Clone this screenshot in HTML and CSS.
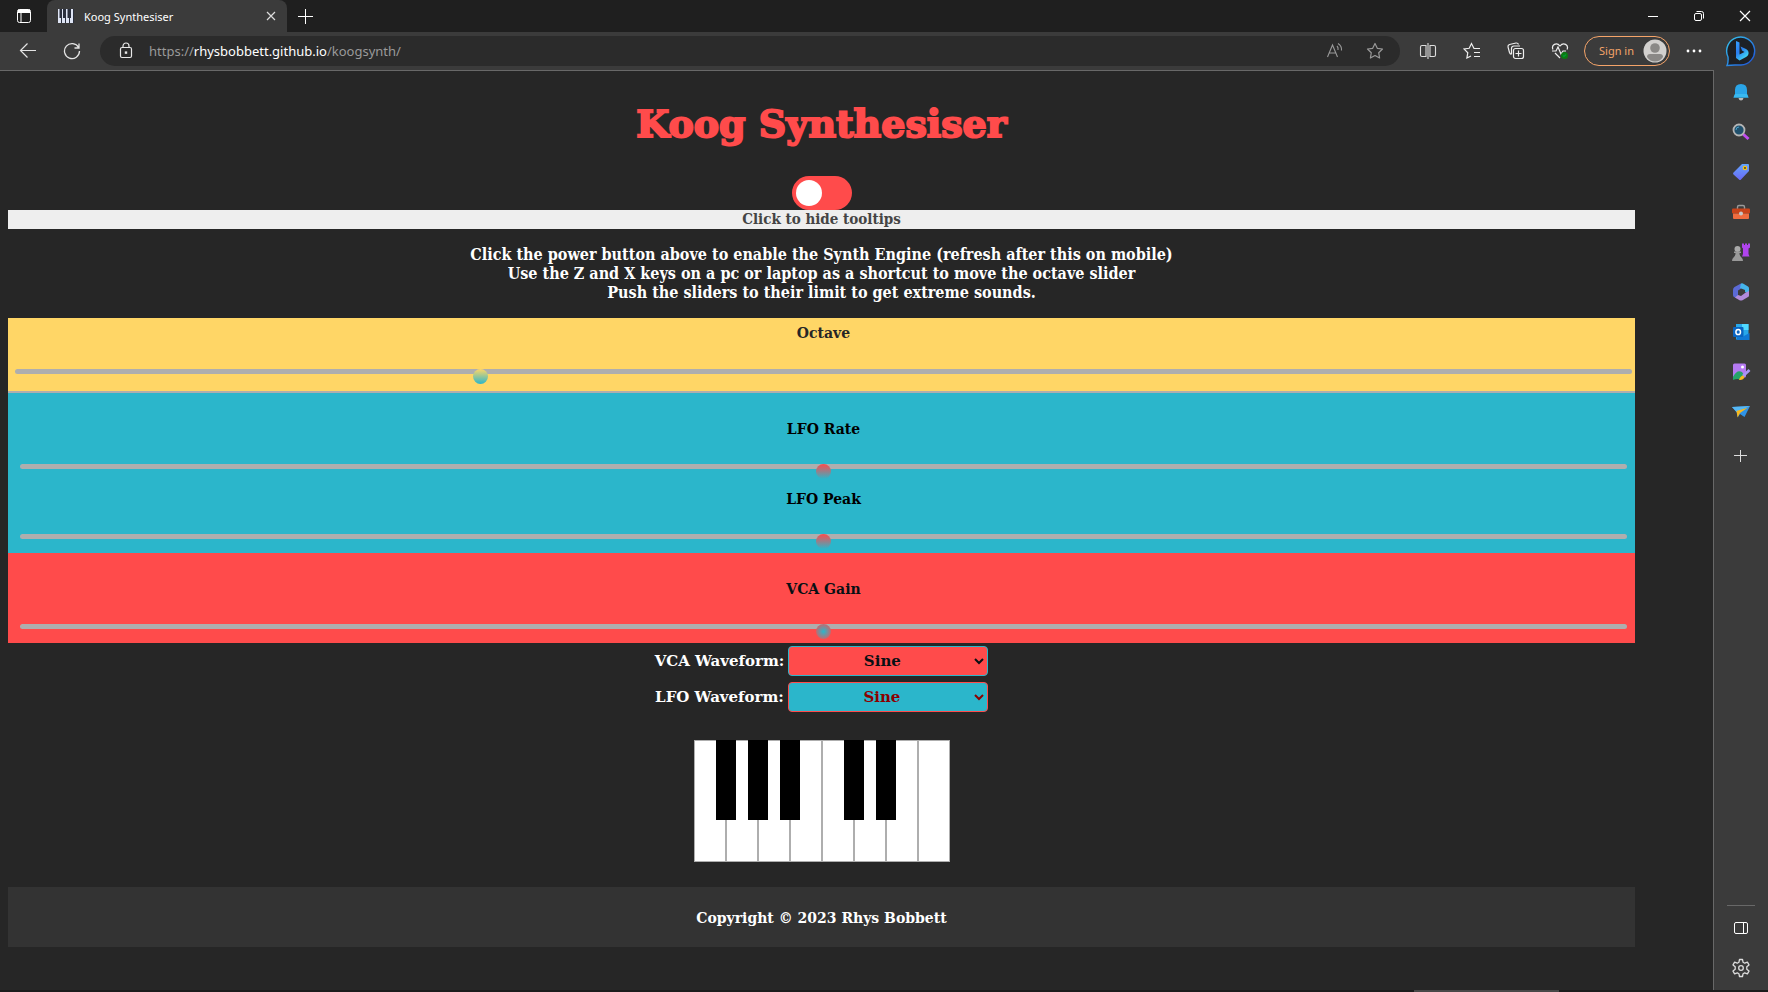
FILE: index.html
```html
<!DOCTYPE html>
<html lang="en">
<head>
<meta charset="utf-8">
<title>Koog Synthesiser</title>
<link rel="stylesheet" href="styles.css">
</head>
<body>
<div class="browser">
  <header class="titlebar">
    <button class="icon-btn tab-actions" aria-label="Tab actions">
      <svg width="16" height="16" viewBox="0 0 16 16" fill="none" stroke="#fff"><rect x="1.5" y="1.5" width="13" height="13" rx="2"/><path d="M2 4h12M2 2.500h12" stroke-width="2"/><path d="M5 5v9"/></svg>
    </button>
    <div class="tab">
      <svg width="16" height="16" viewBox="0 0 16 16"><path fill="#2a2f3d" d="M0 1h16v14H0z"/><path fill="#dfe5f5" d="M0 1h1.500v9H3v5H0zM4 1h1v9h2v5H4zM8 1h1.500v9H11v5H8zM12 10h1V1h2v14h-3z"/></svg>
      <span class="tab-title">Koog Synthesiser</span>
      <button class="icon-btn tab-close" aria-label="Close tab">
        <svg width="10" height="10" viewBox="0 0 10 10" stroke="#ddd" stroke-width="1.2"><path d="M1 1l8 8M9 1L1 9"/></svg>
      </button>
    </div>
    <button class="icon-btn new-tab" aria-label="New tab">
      <svg width="15" height="15" viewBox="0 0 15 15" stroke="#fff"><path d="M7.500 0v15M0 7.500h15"/></svg>
    </button>
    <div class="window-buttons">
      <button class="icon-btn win" aria-label="Minimise"><svg width="12" height="12" viewBox="0 0 12 12" stroke="#fff"><path d="M1 6.500h10"/></svg></button>
      <button class="icon-btn win" aria-label="Restore"><svg width="12" height="12" viewBox="0 0 12 12" fill="none" stroke="#fff"><rect x="1.500" y="3.500" width="7" height="7" rx="1.500"/><path d="M3.500 1.500H8.500q2 0 2 2v5"/></svg></button>
      <button class="icon-btn win" aria-label="Close"><svg width="12" height="12" viewBox="0 0 12 12" stroke="#fff" stroke-width="1.200"><path d="M1 1l10 10M11 1L1 11"/></svg></button>
    </div>
  </header>

  <nav class="toolbar">
    <button class="icon-btn tool back" aria-label="Back"><svg width="18" height="16" viewBox="0 0 18 16" fill="none" stroke="#e4e4e4" stroke-width="1.200"><path d="M17 7.500H1.500M8.500 .5L1.500 7.500l7 7"/></svg></button>
    <button class="icon-btn tool" aria-label="Refresh"><svg width="18" height="18" viewBox="0 0 18 18" fill="none" stroke="#e4e4e4" stroke-width="1.300"><path d="M15.600 5.500A7.500 7.500 0 1 0 16.500 9M16 1.500v4.500h-4.500"/></svg></button>
    <div class="address">
      <svg width="14" height="18" viewBox="0 0 14 18" fill="none" stroke="#e8e8e8" stroke-width="1.200"><rect x="1.500" y="5.500" width="11" height="10" rx="1.500"/><path d="M4 5.500V4a3 3 0 0 1 6 0v1.500"/><rect x="6.400" y="10" width="1.200" height="1.200" fill="#fff"/></svg>
      <div class="url">https://<b>rhysbobbett.github.io</b>/koogsynth/</div>
      <button class="icon-btn" aria-label="Read aloud"><svg width="18" height="18" viewBox="0 0 18 18" fill="none" stroke="#999" stroke-width="1.100"><path d="M1.500 15L6.500 3l5 12M3.200 11h6.600M11 4q1.500 1.500 1 4M12 1.500q4 2.500 3.500 7"/></svg></button>
      <button class="icon-btn star" aria-label="Add to favourites"><svg width="18" height="18" viewBox="0 0 18 18" fill="none" stroke="#999" stroke-width="1.200" stroke-linejoin="round"><path d="M9 1.500l2.300 4.800 5.200.7-3.800 3.700.9 5.300L9 13.500 4.400 16l.9-5.300L1.500 7l5.200-.7z"/></svg></button>
    </div>
    <div class="actions">
      <button class="icon-btn tool" aria-label="Split screen"><svg width="18" height="18" viewBox="0 0 18 18" fill="none" stroke="#ddd" stroke-width="1.100"><path d="M7 3.500H3q-1.500 0-1.500 1.500v8q0 1.500 1.500 1.500h4zM11 3.500h4q1.500 0 1.500 1.500v8q0 1.500-1.500 1.500h-4zM9 1v16"/></svg></button>
      <button class="icon-btn tool" aria-label="Favourites"><svg width="18" height="18" viewBox="0 0 18 18" fill="none" stroke="#eee" stroke-width="1.200"><path d="M17 6.500h-6L8.500 1.500 6.200 6.300 1 7l3.800 3.700-.9 5.300 4.100-2M11 10.500h6M11 14.500h6"/></svg></button>
      <button class="icon-btn tool" aria-label="Collections"><svg width="18" height="18" viewBox="0 0 18 18" fill="none" stroke="#eee" stroke-width="1.200"><rect x="6.500" y="6.500" width="10" height="10" rx="2"/><path d="M11.500 8.500v6M8.500 11.500h6M4.500 12.500q-1.500-.5-2-2L1 5q-.3-2 1.500-2.500L9 1q2-.2 2.500 1.500M4.500 12V6.500q0-2.500 2.500-2.500h6"/></svg></button>
      <button class="icon-btn tool" aria-label="Browser essentials"><svg width="18" height="18" viewBox="0 0 18 18" fill="none" stroke="#eee" stroke-width="1.200"><path d="M2 7.500C0 3 5.500-.5 9 4c3.500-4.500 9-1 7 3.500M1 9h4l2-4 3 7 2-3h3M4 11l5 5"/><circle cx="13.500" cy="13.500" r="3.500" fill="#0b7a12" stroke="none"/><path d="M12 13.500l1 1 2-2" stroke="#093" /></svg></button>
    </div>
    <button class="signin"><span>Sign in</span>
      <svg width="24" height="24" viewBox="0 0 24 24"><circle cx="12" cy="12" r="11.500" fill="#d2d0ce"/><circle cx="12" cy="9" r="4.800" fill="#8a8886"/><path d="M4 18q0-3 3-3h10q3 0 3 3-3 4.500-8 4.500T4 18z" fill="#8a8886"/></svg>
    </button>
    <button class="icon-btn more" aria-label="Settings and more"><svg width="16" height="4" viewBox="0 0 16 4" fill="#fff"><circle cx="2" cy="2" r="1.400"/><circle cx="8" cy="2" r="1.400"/><circle cx="14" cy="2" r="1.400"/></svg></button>
    <button class="icon-btn bing" aria-label="Bing">
      <svg width="32" height="32" viewBox="0 0 32 32"><defs><linearGradient id="ring" x1="0" y1="0" x2="1" y2="1"><stop stop-color="#36c6ee"/><stop offset="1" stop-color="#1e4fd8"/></linearGradient><linearGradient id="bee" x1="0" y1="0" x2="0.600" y2="1"><stop stop-color="#35a0ff"/><stop offset=".5" stop-color="#2a7df0"/><stop offset="1" stop-color="#42dcf5"/></linearGradient></defs><path d="M2 30.500Q3.500 27 3 22A14 14 0 1 1 16 30H10q-4 0-8 .5z" fill="#1d2026" stroke="url(#ring)" stroke-width="1.400"/><path d="M11 6l3.500 1.500v12l5-2.500-2.500-1.500-1.500-4 5.500 2.500q3 1.500 2.500 5-.5 2-2.500 3l-6.500 3.500L11 23z" fill="url(#bee)"/></svg>
    </button>
  </nav>

  <div class="view">
    <main class="page">
      <h1>Koog Synthesiser</h1>
      <label class="switch"><input type="checkbox" aria-label="Power"><span class="knob"></span></label>
      <button class="tips">Click to hide tooltips</button>
      <p class="help">Click the power button above to enable the Synth Engine (refresh after this on mobile)<br>Use the Z and X keys on a pc or laptop as a shortcut to move the octave slider<br>Push the sliders to their limit to get extreme sounds.</p>

      <section class="octave">
        <label for="octave">Octave</label>
        <input id="octave" class="slider thumb-octave" type="range" min="0" max="7" value="2">
      </section>
      <section class="panel lfo">
        <label for="rate">LFO Rate</label>
        <input id="rate" class="slider thumb-lfo" type="range" value="50">
        <label for="peak">LFO Peak</label>
        <input id="peak" class="slider thumb-lfo" type="range" value="50">
      </section>
      <section class="panel vca">
        <label for="gain">VCA Gain</label>
        <input id="gain" class="slider thumb-vca" type="range" value="50">
      </section>

      <div class="wave">
        <label for="vca-wave">VCA Waveform:</label>
        <select id="vca-wave" class="wave-vca"><option>Sine</option><option>Square</option><option>Sawtooth</option><option>Triangle</option></select>
      </div>
      <div class="wave">
        <label for="lfo-wave">LFO Waveform:</label>
        <select id="lfo-wave" class="wave-lfo"><option>Sine</option><option>Square</option><option>Sawtooth</option><option>Triangle</option></select>
      </div>

      <div class="piano">
        <div class="key"><i class="sharp"></i></div>
        <div class="key"><i class="sharp"></i></div>
        <div class="key"><i class="sharp"></i></div>
        <div class="key"></div>
        <div class="key"><i class="sharp"></i></div>
        <div class="key"><i class="sharp"></i></div>
        <div class="key"></div>
        <div class="key"></div>
      </div>
      <footer class="footer">Copyright © 2023 Rhys Bobbett</footer>
    </main>

    <aside class="sidebar">
      <button class="icon-btn side" aria-label="Notifications"><svg width="20" height="20" viewBox="0 0 20 20"><path d="M7.500 16h5q-.5 2.500-2.500 2.500T7.500 16z" fill="#bbb"/><path d="M10 2q6 0 6 6v4l1.500 3.500h-15L4 12V8q0-6 6-6z" fill="#2aa5e8"/><path d="M4 12h12l1.500 3.500h-15z" fill="#39b9f0"/></svg></button>
      <button class="icon-btn side" aria-label="Search"><svg width="20" height="20" viewBox="0 0 20 20"><path d="M12 12l5.500 5" stroke="#c04df0" stroke-width="3"/><circle cx="8" cy="8" r="5.500" fill="#20506c" stroke="#b5b5b5" stroke-width="1.800"/><path d="M5 8q0-3 3-3" fill="none" stroke="#4aa0c8"/></svg></button>
      <button class="icon-btn side" aria-label="Shopping"><svg width="20" height="20" viewBox="0 0 20 20"><defs><linearGradient id="tag" x2="0" y2="1"><stop stop-color="#62a5ff"/><stop offset="1" stop-color="#6a68f5"/></linearGradient></defs><path d="M11 2h6q1 0 1 1v6L10 17.500q-1 1-2 0l-5.500-5q-1-1 0-2z" fill="url(#tag)"/><circle cx="14" cy="6" r="1.700" fill="#444" stroke="#f5c518" stroke-width="1.300"/></svg></button>
      <button class="icon-btn side" aria-label="Tools"><svg width="20" height="20" viewBox="0 0 20 20"><path d="M6.500 7V5q0-1.500 1.500-1.500h4q1.500 0 1.500 1.500v2" fill="none" stroke="#999" stroke-width="1.400"/><rect x="1" y="6.500" width="18" height="5" rx="1" fill="#c8431a"/><path d="M2 11.500h16V16q0 1-1 1H3q-1 0-1-1z" fill="#ef6c3f"/><circle cx="10" cy="11.500" r="2" fill="#c8c8c8"/></svg></button>
      <button class="icon-btn side" aria-label="Games"><svg width="20" height="20" viewBox="0 0 20 20"><path d="M11 1.500h2v1.500h1V1.500h2V3h1V1.500h2v4l-1.500 1V12l1 2.500h-7.500L12 12V6.500l-1-1z" fill="#b044ee"/><circle cx="6.500" cy="7" r="3" fill="#aaa"/><path d="M3 9.500h7V11H8.500q0 3 2 4.500 1.500 1 1.500 3.500H1q0-2.500 1.500-3.500 2-1.500 2-4.500H3z" fill="#999"/></svg></button>
      <button class="icon-btn side" aria-label="Microsoft 365"><svg width="20" height="20" viewBox="0 0 20 20"><path d="M10 1.500L3.500 5Q2 6 2 8v5q0 1.500 1 2l3 1.500 1-2V8.500l4-2.500z" fill="#5b6ad6"/><path d="M10 1.500q1-.5 2 0L17 4.500q1 .7 1 2V12l-4-2V8l-5-2z" fill="#45b4ea"/><path d="M7 13l3 1 4-3 4-2v4.500q0 1-1 1.500l-5.500 3.200q-1.500.7-3 0L4 15.500z" fill="#b18bdc"/></svg></button>
      <button class="icon-btn side" aria-label="Outlook"><svg width="20" height="20" viewBox="0 0 20 20"><path d="M5 2h12.500v15.500H5z" fill="#28a8ea"/><path d="M11 2h6.500v6H11z" fill="#50d9ff"/><path d="M5 11l7 3.500L18.500 11v7H6z" fill="#0f78d4"/><rect x="2" y="5" width="10.500" height="10" rx="1" fill="#0a64c0"/><ellipse cx="7.200" cy="10" rx="2.300" ry="2.600" fill="none" stroke="#fff" stroke-width="1.500"/></svg></button>
      <button class="icon-btn side" aria-label="Image creator"><svg width="20" height="20" viewBox="0 0 20 20"><rect x="2" y="1.500" width="13" height="14" rx="1.500" fill="#b57af2"/><circle cx="11.500" cy="5" r="1.500" fill="#fff"/><path d="M2 15q4-8 9-5l2 3-4 4.500q-3-1-7 .5z" fill="#25a56a"/><path d="M12 14l6.500-6" stroke="#a894f5" stroke-width="2.800"/><path d="M8 18q1-4 4-4.500l1.500 1.500q-1 3.500-5.500 3z" fill="#f5b81f"/></svg></button>
      <button class="icon-btn side" aria-label="Drop"><svg width="20" height="20" viewBox="0 0 20 20"><path d="M1 5l18-1-5.500 11-4.500-3-2 3-1.500-5z" fill="#2f93e6"/><path d="M1 5l18-1L5.500 10z" fill="#56b8f5"/><path d="M5.500 9L17 5.500 9 11l-2.500 4.500z" fill="#f8b81c"/></svg></button>
      <button class="icon-btn side add" aria-label="Customise"><svg width="14" height="14" viewBox="0 0 14 14" stroke="#ddd"><path d="M6.500 1v12M0 6.500h13"/></svg></button>
      <div class="side-bottom">
        <button class="icon-btn side" aria-label="Hide sidebar"><svg width="16" height="14" viewBox="0 0 16 14" fill="none" stroke="#fff"><rect x="1.500" y="1.500" width="13" height="11" rx="1.500"/><path d="M10.500 2v10"/></svg></button>
        <button class="icon-btn side" aria-label="Settings"><svg width="18" height="20" viewBox="0 0 18 20" fill="none" stroke="#ddd" stroke-width="1.300" stroke-linejoin="round"><path d="M7.500 1.500h3l.6 2.800 1.600.9 2.700-1 1.600 2.700-2.200 1.900v2.400l2.200 1.900-1.600 2.700-2.700-1-1.600.9-.6 2.800h-3l-.6-2.800-1.600-.9-2.700 1L1 13.100l2.200-1.900V8.800L1 6.900l1.600-2.700 2.700 1 1.600-.9z"/><circle cx="9" cy="10" r="2.300"/></svg></button>
      </div>
    </aside>
  </div>
  <div class="taskbar"><div class="task-active"></div></div>
</div>
</body>
</html>
```

FILE: styles.css
```css
* { box-sizing: border-box; }

body {
  margin: 0;
  background: #262626;
  font-family: "Noto Sans", sans-serif;
  color: #fff;
}

button { font: inherit; color: inherit; }

.browser {
  display: flex;
  flex-direction: column;
  min-height: 100vh;
}

.icon-btn {
  display: flex;
  align-items: center;
  justify-content: center;
  flex: none;
  padding: 0;
  border: 0;
  background: none;
}

/* Title bar */
.titlebar {
  display: flex;
  height: 32px;
  background: #1f1f1f;
}
.tab-actions { width: 47px; }
.tab {
  display: flex;
  align-items: center;
  width: 240px;
  padding: 0 6px 0 11px;
  gap: 10px;
  border-radius: 8px 8px 0 0;
  background: #3b3b3b;
}
.tab-title {
  flex: 1;
  font-size: 11px;
}
.tab-close { width: 20px; height: 20px; }
.new-tab { width: 36px; }
.window-buttons {
  display: flex;
  margin-left: auto;
}
.win { width: 46px; }

/* Toolbar */
.toolbar {
  display: flex;
  align-items: center;
  height: 39px;
  padding: 0 11px 2px 6px;
  background: #3b3b3b;
}
.tool { width: 44px; height: 30px; }
.address {
  display: flex;
  align-items: center;
  flex: 1;
  height: 30px;
  margin-left: 6px;
  padding: 0 16px 0 19px;
  border-radius: 15px;
  background: #2b2b2b;
}
.url {
  flex: 1;
  margin-left: 16px;
  font-size: 13px;
  color: #9a9a9a;
}
.url b { font-weight: 400; color: #fff; }
.star { margin-left: 22px; }
.actions {
  display: flex;
  margin: 0 2px 0 6px;
}
.signin {
  display: flex;
  align-items: center;
  justify-content: space-between;
  width: 86px;
  height: 30px;
  padding: 0 2px 0 14px;
  border: 1px solid #f5a469;
  border-radius: 15px;
  background: none;
  color: #f5a469;
  font-size: 11px;
  white-space: nowrap;
}
.more { width: 48px; height: 30px; }
.bing { margin-left: 7px; }

/* Viewport */
.view {
  display: flex;
  flex: 1;
}
.page {
  flex: 1;
  padding: 0 78px 0 8px;
  border-top: 1px solid #686868;
  border-right: 1px solid #686868;
  margin-top: -1px;
  font-family: "DejaVu Serif", serif;
  font-weight: 700;
  font-size: 14px;
  line-height: 20px;
  text-align: center;
}
h1 {
  margin: 29px 0 28px;
  font-size: 38px;
  line-height: 48px;
  color: #ff4b4b;
  -webkit-text-stroke: 2px #ff4b4b;
}
.switch {
  display: flex;
  width: 60px;
  height: 34px;
  margin: 0 auto;
  padding: 4px;
  border-radius: 17px;
  background: #ff4b4b;
}
.switch input {
  appearance: none;
  width: 0;
  height: 0;
  margin: 0;
}
.knob {
  width: 26px;
  height: 26px;
  border-radius: 50%;
  background: #fff;
}
.tips {
  display: block;
  width: 100%;
  padding: 0;
  border: 0;
  background: #eee;
  color: #444;
  font-family: "DejaVu Serif Condensed", "DejaVu Serif", serif;
  font-size: 15px;
  line-height: 19px;
}
.help {
  margin: 16px 0;
  font-family: "DejaVu Serif Condensed", "DejaVu Serif", serif;
  font-size: 16px;
  line-height: 19px;
}

/* Sliders */
.slider {
  appearance: none;
  display: block;
  width: 100%;
  height: 5px;
  margin: 0;
  border-radius: 5px;
  background: #aeaeae;
}
.slider::-webkit-slider-runnable-track { height: 5px; }
.slider::-webkit-slider-thumb {
  appearance: none;
  width: 15px;
  height: 15px;
  border-radius: 50%;
}
.thumb-octave::-webkit-slider-thumb { background: linear-gradient(#ffd666, #2bb6cb); }
.thumb-lfo::-webkit-slider-thumb { background: linear-gradient(#ff4b4b, #2bb6cb); }
.thumb-vca::-webkit-slider-thumb { background: radial-gradient(#2bb6cb, #ff4b4b); }

.octave {
  padding: 5px 3px 17px 7px;
  border-bottom: 2px solid #aeaeae;
  background: #ffd666;
  color: #262626;
}
.octave label, .panel label { display: block; }
.octave label { margin-bottom: 26px; }
.panel { padding: 26px 8px 14px 12px; }
.panel label { margin-bottom: 25px; }
.panel .slider + label { margin-top: 20px; }
.lfo { background: #2bb6cb; color: #000; }
.vca { background: #ff4b4b; color: #081014; }

/* Waveform menus */
.wave {
  display: flex;
  align-items: center;
  justify-content: center;
  gap: 4px;
  padding: 3px 0;
  font-size: 15px;
}
.wave select {
  width: 200px;
  height: 30px;
  border: 1px solid;
  border-radius: 4px;
  font: inherit;
  text-align: center;
  text-align-last: center;
}
.wave .wave-vca { border-color: #2bb6cb; background: #ff4b4b; color: #081014; }
.wave .wave-lfo { border-color: #ff4b4b; background: #2bb6cb; color: #8b0000; }

/* Keyboard */
.piano {
  display: flex;
  width: 256px;
  margin: 25px auto;
}
.key {
  position: relative;
  width: 32px;
  height: 122px;
  border: 1px solid #aeaeae;
  background: #fff;
}
.sharp {
  position: absolute;
  z-index: 1;
  top: -1px;
  right: -11px;
  width: 20px;
  height: 80px;
  background: #000;
}
.footer {
  padding: 21px 0 19px;
  background: #333;
}

/* Sidebar */
.sidebar {
  display: flex;
  flex-direction: column;
  align-items: center;
  flex: none;
  width: 54px;
  padding: 1px 0 2px;
  background: #3b3b3b;
}
.side { width: 40px; height: 40px; }
.add { margin-top: 4px; }
.side-bottom {
  display: flex;
  flex-direction: column;
  align-items: center;
  width: 28px;
  margin-top: auto;
  padding-top: 2px;
  border-top: 1px solid #686868;
}

.taskbar {
  display: flex;
  height: 2px;
  padding-left: 80%;
  background: #1b1b1b;
}
.task-active {
  width: 145px;
  background: #484848;
}
```
